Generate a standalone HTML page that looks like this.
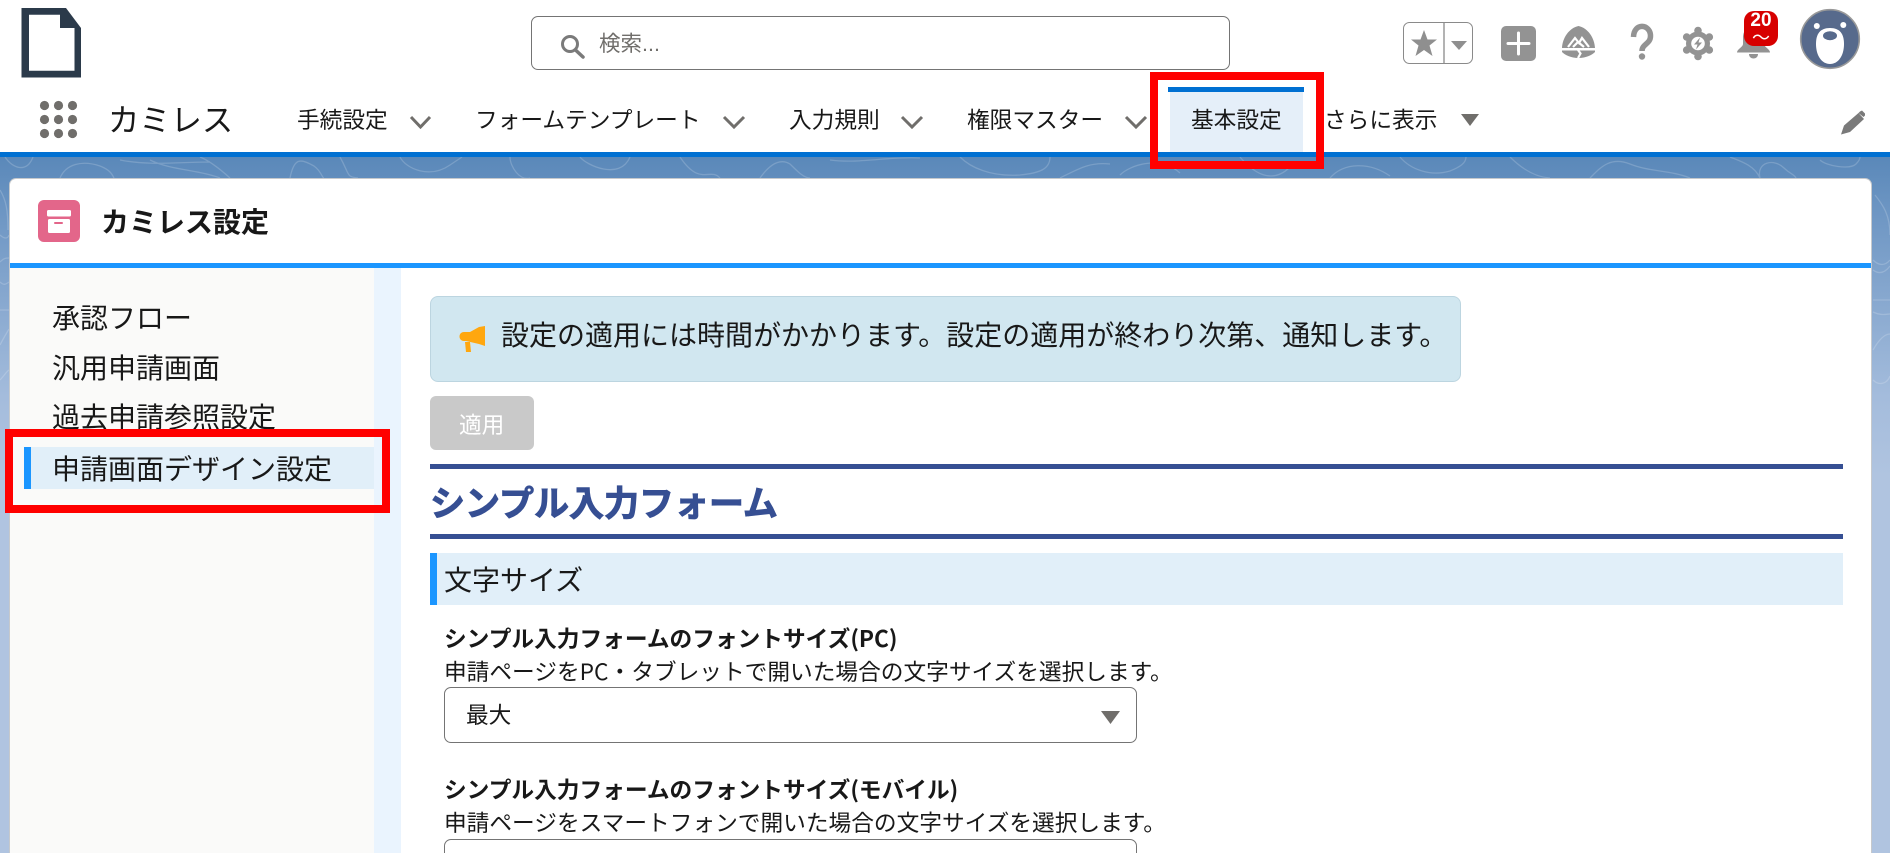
<!DOCTYPE html>
<html lang="ja">
<head>
<meta charset="utf-8">
<title>カミレス設定</title>
<style>
html,body{margin:0;padding:0;width:1890px;height:853px;overflow:hidden;background:#fff}
body{position:relative;font-family:"Liberation Sans","Noto Sans CJK JP",sans-serif;color:#181818}
.a{position:absolute;box-sizing:border-box}
.t{position:absolute;white-space:nowrap;line-height:40px;height:40px}
.n{font-size:22.7px}
.s{font-size:28px}
.b{font-weight:700}
.j{font-family:"Noto Sans CJK JP","Liberation Sans",sans-serif}
svg{position:absolute;overflow:visible}
</style>
</head>
<body>
<!-- background -->
<div class="a" style="left:0;top:157px;width:1890px;height:696px;background:linear-gradient(180deg,#5a88b9 0,#6f97c4 60px,#a4bcdc 240px,#b0c4e0 320px,#b0c4e0 100%)"></div>
<svg style="left:0;top:157px" width="1890" height="300" viewBox="0 157 1890 300" fill="none" stroke="#fff" stroke-opacity=".18" stroke-width="1.3">
<path d="M5 157c8 12 22 16 28 0M60 178c6-14 22-18 40-12 10 4 12 8 14 12M120 160c30 6 60 2 90 2M150 160c20 10 50 10 70 18M200 157c10 4 20 12 30 21M290 178c4-20 10-20 24-12 8 6 8 12 10 12M340 157c10 18 6 20 18 21"/>
<path d="M400 157c6 12 30 22 50 8l12-8M510 157c0 10 10 24 20 21M580 157c6 8 40 24 50 0M680 157c20 30 30 10 40 21M760 178c10-14 20-20 30-14 8 8 14 14 20 14M830 160c30 4 60-4 90-2"/>
<path d="M960 157c10 10 30 20 60 18 20-2 30-6 30-18M1060 178c20-10 30-16 50-14M1120 175c10-10 40-20 60-2M1240 157c10 12 30 30 50 10M1330 178c14-16 40-16 60-2"/>
<path d="M1400 157c10 12 30 20 50 14 10-4 16-8 16-14M1510 157c10 10 24 20 40 21M1590 178c10-10 20-22 40-14 20 8 40 6 60 14M1730 157c10 4 24 8 30 21M1760 178c-4-16 14-20 24-10 6 6 10 6 12 10M1820 160c6 6 30 10 36 4 4-4 4-6 4-7"/>
<path d="M1875 195c8 10 15 20 15 40M1873 260c6 6 12 6 17 0M1873 270c8 6 14 0 17-4M1873 300h17M1873 312c8 4 14 2 17 2M1873 350c8-14 14-16 17-16M1873 380c6 6 14 4 17-4"/>
<path d="M0 190c6 10 8 20 8 40M0 235c4 4 8 4 9 0M0 262c4-4 6-4 9-4M0 282c4 4 6 2 9 0M0 310h9M0 345c4-8 8-14 9-16M0 380c4-4 6-8 9-10"/>
</svg>

<!-- card -->
<div class="a" style="left:9px;top:178px;width:1863px;height:690px;background:#fff;border:1px solid #c6c9cc;border-bottom:0;border-radius:7px 7px 0 0"></div>
<div class="a" style="left:10px;top:263px;width:1861px;height:5px;background:#1b96ff"></div>
<div class="a" style="left:10px;top:268px;width:364px;height:585px;background:#fafaf9"></div>
<div class="a" style="left:374px;top:268px;width:27px;height:585px;background:#eaf4fe"></div>

<!-- header -->
<svg style="left:0;top:0" width="1890" height="160" viewBox="0 0 1890 160">
<path fill="#2b3a4a" d="M21.5 8H66L81 28V77.5H21.5Z"/>
<path fill="#fff" d="M29 14.7H60V28H74.5V70.7H29Z"/>
<!-- search -->
<circle cx="570" cy="44" r="7.5" fill="none" stroke="#7a7a7a" stroke-width="3"/>
<path d="M575.5 50L583 57" stroke="#7a7a7a" stroke-width="3.5" stroke-linecap="round"/>
<!-- grid -->
<g fill="#706e6b"><circle cx="44.5" cy="105.5" r="4.6"/><circle cx="58.5" cy="105.5" r="4.6"/><circle cx="72.5" cy="105.5" r="4.6"/><circle cx="44.5" cy="119.5" r="4.6"/><circle cx="58.5" cy="119.5" r="4.6"/><circle cx="72.5" cy="119.5" r="4.6"/><circle cx="44.5" cy="133.5" r="4.6"/><circle cx="58.5" cy="133.5" r="4.6"/><circle cx="72.5" cy="133.5" r="4.6"/></g>
<!-- chevrons -->
<g fill="none" stroke="#706e6b" stroke-width="3"><path d="M411 117L420.5 127L430 117"/><path d="M724 117L734 127L744 117"/><path d="M902 117L912 127L922 117"/><path d="M1126 117L1136 127L1146 117"/></g>
<path fill="#706e6b" d="M1461 114H1479L1470 126Z"/>
<!-- pencil -->
<path fill="#7a7a7a" d="M1841 134.5L1844 125.5L1858.5 113L1864 119L1850 132ZM1860 111.5l2-1 3 3 0 2-1.5 1.5-5-4Z"/>
<!-- star box -->
<rect x="1403.5" y="22.5" width="69" height="41" rx="6" fill="#fff" stroke="#8a8a8a"/>
<path d="M1444 23V63" stroke="#8a8a8a" stroke-width="1.3"/>
<path fill="#8f8f8f" d="M1424 30L1427.5 39.5H1437L1429.5 45.5L1432.5 56L1424 50L1415.5 56L1418.5 45.5L1411 39.5H1420.5Z"/>
<path fill="#8f8f8f" d="M1451 41H1467L1459 50Z"/>
<!-- plus -->
<rect x="1501" y="26" width="35" height="35" rx="5" fill="#939393"/>
<path d="M1518.5 33V54M1508 43.5H1529" stroke="#fff" stroke-width="3" stroke-linecap="round"/>
<!-- trailhead -->
<path fill="#939393" d="M1578.5 26C1569 28 1562.5 38 1562 48H1595C1594.5 38 1588 28 1578.5 26ZM1562 50.5H1595V52C1592 55 1586 58 1578.5 58C1571 58 1565 55 1562 52Z"/>
<path fill="none" stroke="#fff" stroke-width="2.2" d="M1568 47L1575 38L1579 43L1582 38L1589 47M1573 47L1578 42L1584 47M1578 50L1580.5 53.5L1578 58"/>
<!-- question -->
<path fill="none" stroke="#939393" stroke-width="5.5" d="M1633.5 37C1634 22 1650.5 24 1650.5 36C1650.5 44 1642 44 1642 51"/>
<circle cx="1642" cy="56.5" r="3.2" fill="#939393"/>
<!-- gear -->
<g fill="#939393"><circle cx="1698" cy="43.5" r="12"/><circle cx="1698" cy="30.5" r="3.8"/><circle cx="1698" cy="56.5" r="3.8"/><circle cx="1686.7" cy="37" r="3.8"/><circle cx="1709.3" cy="37" r="3.8"/><circle cx="1686.7" cy="50" r="3.8"/><circle cx="1709.3" cy="50" r="3.8"/></g>
<circle cx="1698" cy="43.5" r="6.8" fill="#fff"/>
<path fill="#939393" d="M1700 37.5L1694 44.5H1697.5L1696 49.5L1702 42.5H1698.5Z"/>
<!-- bell -->
<path fill="#939393" d="M1753.5 26C1746 26 1743 32 1743 38V44C1743 47 1737 49 1737 52.5H1770C1770 49 1764 47 1764 44V38C1764 32 1761 26 1753.5 26Z"/>
<path fill="#939393" d="M1749 54H1758C1758 60 1749 60 1749 54Z"/>
<!-- avatar -->
<circle cx="1830" cy="39" r="29.3" fill="#576a8c" stroke="#999" stroke-width="1.6"/>
<circle cx="1816.8" cy="26" r="3" fill="#fff"/><circle cx="1843.3" cy="25" r="3" fill="#fff"/>
<path fill="#fff" d="M1830 28C1820 28 1816 34 1816 44C1816 56 1822 64 1830 64C1838 64 1844 56 1844 44C1844 34 1840 28 1830 28Z"/>
<ellipse cx="1830" cy="35.7" rx="7" ry="4.5" fill="#576a8c"/>
</svg>

<div class="a" style="left:531px;top:16px;width:699px;height:54px;border:1px solid #747474;border-radius:7px"></div>
<div class="t" style="left:599px;top:24px;font-size:21.5px;color:#706e6b">検索...</div>

<div class="t" style="left:108px;top:101px;font-size:31.3px">カミレス</div>
<div class="t n" style="left:297px;top:100px">手続設定</div>
<div class="t n" style="left:475px;top:100px">フォームテンプレート</div>
<div class="t n" style="left:789px;top:100px">入力規則</div>
<div class="t n" style="left:967px;top:100px">権限マスター</div>
<div class="a" style="left:1170px;top:92px;width:133px;height:60px;background:#e5eff9"></div>
<div class="a" style="left:1168px;top:87px;width:136px;height:5px;background:#0070d2"></div>
<div class="t n" style="left:1191px;top:100px">基本設定</div>
<div class="t n" style="left:1324px;top:100px">さらに表示</div>
<div class="a" style="left:0;top:152px;width:1890px;height:5px;background:#0070d2"></div>

<!-- red box 1 -->
<div class="a" style="left:1150px;top:72px;width:174px;height:97px;border:8px solid #f00"></div>

<!-- card header -->
<svg style="left:38px;top:200px" width="42" height="42" viewBox="0 0 42 42">
<rect width="42" height="42" rx="6" fill="#e3668a"/>
<rect x="9" y="10" width="24" height="6.5" rx="1.5" fill="#fff"/>
<rect x="10" y="19" width="22" height="14" rx="1.5" fill="#fff"/>
<rect x="16" y="22" width="9" height="2" rx="1" fill="#e3668a"/>
</svg>
<div class="t s b" style="left:101px;top:203px">カミレス設定</div>

<!-- side nav -->
<div class="t s" style="left:52px;top:299px">承認フロー</div>
<div class="t s" style="left:52px;top:349px">汎用申請画面</div>
<div class="t s" style="left:52px;top:398px">過去申請参照設定</div>
<div class="a" style="left:24px;top:447px;width:350px;height:42px;background:#e1eff9"></div>
<div class="a" style="left:24px;top:447px;width:7px;height:42px;background:#1b96ff"></div>
<div class="t s" style="left:52px;top:450px">申請画面デザイン設定</div>
<div class="a" style="left:4.5px;top:429px;width:385.5px;height:84px;border:8px solid #f00"></div>

<!-- notice -->
<div class="a" style="left:430px;top:296px;width:1031px;height:86px;background:#d1e7f0;border:1px solid #bcd5e0;border-radius:8px"></div>
<svg style="left:459px;top:326px" width="27" height="27" viewBox="0 0 27 27">
<path fill="#ffa70f" d="M20 1L26 0V20L20 18L7 15H5C-1 15-1 6 5 6H11Z"/>
<path fill="#ffa70f" d="M6 16H11L12 26H7Z"/>
</svg>
<div class="t s" style="left:501px;top:316px">設定の適用には時間がかかります。設定の適用が終わり次第、通知します。</div>

<!-- button -->
<div class="a" style="left:430px;top:396px;width:104px;height:54px;background:#c9c9c9;border-radius:6px"></div>
<div class="t n" style="left:459px;top:405px;color:#fff">適用</div>

<!-- title -->
<div class="a" style="left:430px;top:464px;width:1413px;height:5px;background:#364f93"></div>
<div class="t b" style="left:430px;top:485px;font-size:35px;color:#364f93;-webkit-text-stroke:1px #364f93">シンプル入力フォーム</div>
<div class="a" style="left:430px;top:534px;width:1413px;height:5px;background:#364f93"></div>

<!-- section -->
<div class="a" style="left:430px;top:553px;width:1413px;height:52px;background:#e1eff9"></div>
<div class="a" style="left:430px;top:553px;width:7px;height:52px;background:#1b96ff"></div>
<div class="t s" style="left:444px;top:561px">文字サイズ</div>

<div class="t n b j" style="left:444px;top:618px">シンプル入力フォームのフォントサイズ(PC)</div>
<div class="t n j" style="left:444px;top:651px">申請ページをPC・タブレットで開いた場合の文字サイズを選択します。</div>
<div class="a" style="left:444px;top:687px;width:693px;height:56px;border:1px solid #747474;border-radius:7px"></div>
<div class="t n" style="left:466px;top:695px">最大</div>
<svg style="left:1101px;top:711px" width="19" height="13" viewBox="0 0 19 13"><path fill="#706e6b" d="M0 0H19L9.5 13Z"/></svg>

<div class="t n b j" style="left:444px;top:769px">シンプル入力フォームのフォントサイズ(モバイル)</div>
<div class="t n" style="left:444px;top:803px">申請ページをスマートフォンで開いた場合の文字サイズを選択します。</div>
<div class="a" style="left:444px;top:839px;width:693px;height:56px;border:1px solid #747474;border-radius:7px"></div>

<!-- badge (above bell) -->
<div class="a" style="left:1744px;top:11px;width:34px;height:35px;background:#d70000;border-radius:10px"></div>
<div class="t b" style="left:1744px;top:11px;width:34px;height:20px;line-height:20px;text-align:center;color:#fff;font-size:19px">20</div>
<div class="t" style="left:1744px;top:28px;width:34px;height:20px;line-height:20px;text-align:center;color:#fff;font-size:18px">〜</div>
</body>
</html>
